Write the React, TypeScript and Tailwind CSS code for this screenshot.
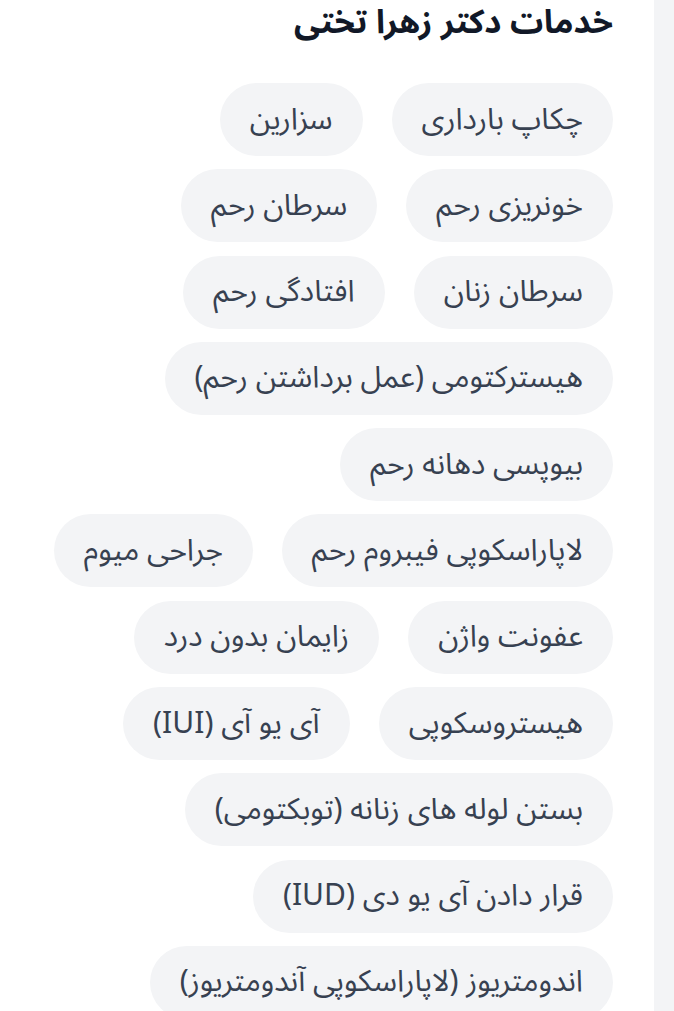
const services = [
  "چکاپ بارداری",
  "سزارین",
  "خونریزی رحم",
  "سرطان رحم",
  "سرطان زنان",
  "افتادگی رحم",
  "هیسترکتومی (عمل برداشتن رحم)",
  "بیوپسی دهانه رحم",
  "لاپاراسکوپی فیبروم رحم",
  "جراحی میوم",
  "عفونت واژن",
  "زایمان بدون درد",
  "هیستروسکوپی",
  "آی یو آی (IUI)",
  "بستن لوله های زنانه (توبکتومی)",
  "قرار دادن آی یو دی (IUD)",
  "اندومتریوز (لاپاراسکوپی آندومتریوز)",
];

export default function App() {
  return (
    <div
      dir="rtl"
      className="flex h-[1011px] w-[674px] overflow-hidden bg-white"
      style={{ fontFamily: '"Noto Sans Arabic", Vazirmatn, "DejaVu Sans", sans-serif' }}
    >
      <div className="w-[20px] shrink-0 bg-[#f3f4f6]" />
      <div className="flex-1 pl-[40px] pr-[41px]">
        <h2 className="text-[33px] font-bold leading-[46px] text-[#111827]">
          خدمات دکتر زهرا تختی
        </h2>
        <div className="mt-[37px] flex flex-wrap gap-x-[29px] gap-y-[13.3px]">
          {services.map((s) => (
            <span
              key={s}
              className="flex h-[73px] items-center rounded-full bg-[#f3f4f6] px-[30px] text-[30px] leading-[40px] text-[#374151]"
            >
              {s}
            </span>
          ))}
        </div>
      </div>
    </div>
  );
}
